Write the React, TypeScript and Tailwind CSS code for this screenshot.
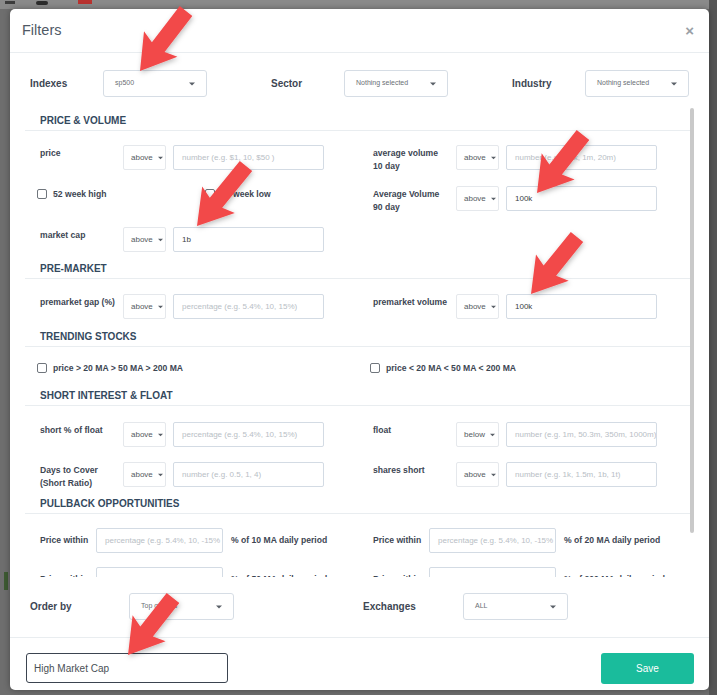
import React from "react";

const Caret = ({ w = 6 }: { w?: number }) => (
  <svg width={w} height={4} viewBox="0 0 6 4" className="shrink-0">
    <path d="M0 0.5h6L3 3.6z" fill="#5a6068" />
  </svg>
);

const TopSelect = ({ value, w = 104 }: { value: string; w?: number }) => (
  <div
    className="h-[27px] border border-[#d6dde5] rounded-[3px] flex items-center justify-between pl-[11px] pr-[11px] text-[7px] text-[#6a6f75] bg-white shrink-0"
    style={{ width: w }}
  >
    <span>{value}</span>
    <Caret />
  </div>
);

const OpSelect = ({ value }: { value: string }) => (
  <div className="w-[43px] h-[25px] border border-[#e5e8ec] rounded-[2px] flex items-center pl-[7px] gap-[5px] text-[8px] text-[#555b62] shrink-0">
    <span>{value}</span>
    <Caret w={5} />
  </div>
);

const Input = ({ ph, value, w = 151 }: { ph?: string; value?: string; w?: number }) => (
  <div
    className={`h-[25px] border border-[#d3dbe4] rounded-[2px] flex items-center pl-[8px] text-[8px] whitespace-nowrap overflow-hidden shrink-0 ${
      value ? "text-[#3a3f45]" : "text-[#b8bec5]"
    }`}
    style={{ width: w }}
  >
    {value ?? ph}
  </div>
);

const Label = ({ children, w = 83 }: { children: React.ReactNode; w?: number }) => (
  <div
    className="h-[25px] text-[8.6px] font-bold text-[#3d4653] leading-[13px] pt-[2px] shrink-0 overflow-visible"
    style={{ width: w }}
  >
    {children}
  </div>
);

const Field = ({
  label,
  op = "above",
  ph,
  value,
}: {
  label: React.ReactNode;
  op?: string;
  ph?: string;
  value?: string;
}) => (
  <div className="flex items-start h-[25px]">
    <Label>{label}</Label>
    <OpSelect value={op} />
    <div className="w-[7px]" />
    <Input ph={ph} value={value} />
  </div>
);

const Heading = ({ children, mt }: { children: React.ReactNode; mt: string }) => (
  <div
    className={`h-[19px] border-b border-[#e9edf0] pl-[15px] text-[10px] font-bold text-[#34495e] leading-[18px] ${mt}`}
  >
    {children}
  </div>
);

const Row = ({ children, mt }: { children: React.ReactNode; mt: string }) => (
  <div className={`grid grid-cols-[333px_1fr] h-[25px] pl-[15px] ${mt}`}>{children}</div>
);

const Check = ({ label }: { label: string }) => (
  <div className="flex items-center">
    <div className="w-[10px] h-[10px] border border-[#6f757c] rounded-[2px] bg-white shrink-0" />
    <span className="ml-[6px] text-[8.6px] font-bold text-[#3d4653] whitespace-nowrap">{label}</span>
  </div>
);

const Pull = ({ suffix }: { suffix: string }) => (
  <div className="flex items-center h-[25px]">
    <div className="w-[56px] text-[8.6px] font-bold text-[#3d4653] shrink-0">Price within</div>
    <Input ph="percentage (e.g. 5.4%, 10, -15%" w={127} />
    <div className="ml-[8px] text-[8.6px] font-bold text-[#3d4653] whitespace-nowrap">{suffix}</div>
  </div>
);

function arrow(tip: [number, number], tail: [number, number]) {
  const dx = tip[0] - tail[0];
  const dy = tip[1] - tail[1];
  const L = Math.hypot(dx, dy);
  const d = [dx / L, dy / L];
  const n = [-d[1], d[0]];
  const H = 34;
  const W = 21;
  const w = 8;
  const B = [tip[0] - d[0] * H, tip[1] - d[1] * H];
  const B2 = [tip[0] - d[0] * (H - 4), tip[1] - d[1] * (H - 4)];
  const pts = [
    [tail[0] + n[0] * w, tail[1] + n[1] * w],
    [B2[0] + n[0] * w, B2[1] + n[1] * w],
    [B[0] + n[0] * W, B[1] + n[1] * W],
    tip,
    [B[0] - n[0] * W, B[1] - n[1] * W],
    [B2[0] - n[0] * w, B2[1] - n[1] * w],
    [tail[0] - n[0] * w, tail[1] - n[1] * w],
  ];
  return pts.map((p) => `${p[0].toFixed(1)},${p[1].toFixed(1)}`).join(" ");
}

const ARROWS: [[number, number], [number, number]][] = [
  [[140, 71], [186, 11]],
  [[197, 226], [246, 166]],
  [[537, 193], [583, 135]],
  [[531, 294], [577, 237]],
  [[128, 655], [173, 598]],
];

export default function App() {
  return (
    <div className="relative w-[717px] h-[695px] bg-[#6e6e6e] overflow-hidden pl-[10px] pt-[9px] font-['Liberation_Sans',Arial,sans-serif]">
      {/* background fragments */}
      <div className="absolute left-0 top-0 w-[717px] h-[9px] bg-[#8a8a8a]" />
      <div className="absolute left-[78px] top-0 w-[14px] h-[4px] bg-[#b8322f]" />
      <div className="absolute left-[36px] top-[1px] w-[12px] h-[4px] bg-[#2c2c2c] rounded-[2px]" />
      <div className="absolute left-[5px] top-[1px] w-[10px] h-[3px] bg-[#3c3c3c]" />
      <div className="absolute left-[4px] top-[572px] w-[4px] h-[18px] bg-[#3d5a32]" />
      <div className="absolute left-[709px] top-0 w-[8px] h-[695px] bg-[#555]" />

      <div className="relative w-[699px] h-[681px] bg-white rounded-[5px] flex flex-col shadow-[0_0_6px_rgba(0,0,0,0.35)]">
        {/* header */}
        <div className="h-[44px] shrink-0 border-b border-[#e9edf0] flex items-center justify-between pl-[12px] pr-[15px]">
          <span className="text-[14.5px] text-[#4f5a66]">Filters</span>
          <span className="text-[15px] font-bold text-[#9aa0a6] leading-none">×</span>
        </div>

        {/* body */}
        <div className="flex-1 flex flex-col min-h-0">
          <div className="mt-[17px] pl-[20px] flex">
            {[
              ["Indexes", "sp500"],
              ["Sector", "Nothing selected"],
              ["Industry", "Nothing selected"],
            ].map(([l, v]) => (
              <div key={l} className="w-[241px] shrink-0 flex items-center">
                <div className="w-[73px] shrink-0 text-[10px] font-bold text-[#3d4653]">{l}</div>
                <TopSelect value={v} />
              </div>
            ))}
          </div>

          {/* scroll area */}
          <div className="mt-[6px] ml-[15px] h-[474px] flex shrink-0">
            <div className="w-[665px] h-[474px] overflow-hidden">
              <Heading mt="mt-[9px]">PRICE &amp; VOLUME</Heading>
              <Row mt="mt-[14px]">
                <Field label="price" ph="number (e.g. $1, 10, $50 )" />
                <Field
                  label={
                    <>
                      average volume
                      <br />
                      10 day
                    </>
                  }
                  ph="number (e.g. 1.2k, 1m, 20m)"
                />
              </Row>
              <Row mt="mt-[16px]">
                <div className="flex items-start pt-[2px] -ml-[3px]">
                  <div className="w-[168px]">
                    <Check label="52 week high" />
                  </div>
                  <Check label="52 week low" />
                </div>
                <Field
                  label={
                    <>
                      Average Volume
                      <br />
                      90 day
                    </>
                  }
                  value="100k"
                />
              </Row>
              <Row mt="mt-[16px]">
                <Field label="market cap" value="1b" />
                <div />
              </Row>

              <Heading mt="mt-[8px]">PRE-MARKET</Heading>
              <Row mt="mt-[15px]">
                <Field label="premarket gap (%)" ph="percentage (e.g. 5.4%, 10, 15%)" />
                <Field label="premarket volume" value="100k" />
              </Row>

              <Heading mt="mt-[9px]">TRENDING STOCKS</Heading>
              <Row mt="mt-[9px]">
                <div className="h-[25px] flex items-center -ml-[3px]">
                  <Check label="price > 20 MA > 50 MA > 200 MA" />
                </div>
                <div className="h-[25px] flex items-center -ml-[3px]">
                  <Check label="price < 20 MA < 50 MA < 200 MA" />
                </div>
              </Row>

              <Heading mt="mt-[6px]">SHORT INTEREST &amp; FLOAT</Heading>
              <Row mt="mt-[16px]">
                <Field label="short % of float" ph="percentage (e.g. 5.4%, 10, 15%)" />
                <Field label="float" op="below" ph="number (e.g. 1m, 50.3m, 350m, 1000m)" />
              </Row>
              <Row mt="mt-[15px]">
                <Field
                  label={
                    <>
                      Days to Cover
                      <br />
                      (Short Ratio)
                    </>
                  }
                  ph="number (e.g. 0.5, 1, 4)"
                />
                <Field label="shares short" ph="number (e.g. 1k, 1.5m, 1b, 1t)" />
              </Row>

              <Heading mt="mt-[8px]">PULLBACK OPPORTUNITIES</Heading>
              <Row mt="mt-[14px]">
                <Pull suffix="% of 10 MA daily period" />
                <Pull suffix="% of 20 MA daily period" />
              </Row>
              <Row mt="mt-[14px]">
                <Pull suffix="% of 50 MA daily period" />
                <Pull suffix="% of 200 MA daily period" />
              </Row>
              <Row mt="mt-[14px]">
                <Pull suffix="% of 10 EMA daily period" />
                <Pull suffix="% of 20 EMA daily period" />
              </Row>
            </div>
            <div className="w-[4px]">
              <div className="mt-[5px] h-[425px] w-[4px] bg-[#c9c9c9] rounded-[2px]" />
            </div>
          </div>

          {/* order by */}
          <div className="mt-[16px] pl-[20px] flex">
            <div className="w-[333px] shrink-0 flex items-center">
              <div className="w-[99px] shrink-0 text-[10px] font-bold text-[#3d4653]">Order by</div>
              <TopSelect value="Top gainers" w={105} />
            </div>
            <div className="flex items-center">
              <div className="w-[100px] shrink-0 text-[10px] font-bold text-[#3d4653]">Exchanges</div>
              <TopSelect value="ALL" w={105} />
            </div>
          </div>
        </div>

        {/* footer */}
        <div className="h-[53px] shrink-0 border-t border-[#e9edf0] flex items-start justify-between pl-[16px] pr-[15px] pt-[15px]">
          <div className="w-[202px] h-[30px] border-[1.5px] border-[#3b4450] rounded-[3px] flex items-center pl-[7px] text-[10px] text-[#4a4f55]">
            High Market Cap
          </div>
          <div className="w-[93px] h-[31px] bg-[#1abc9c] rounded-[3px] flex items-center justify-center text-[10px] text-white">
            Save
          </div>
        </div>
      </div>

      {/* annotation arrows */}
      <svg className="absolute left-0 top-0 pointer-events-none" width={717} height={695}>
        <defs>
          <filter id="sh" x="-30%" y="-30%" width="160%" height="160%">
            <feDropShadow dx="1" dy="2" stdDeviation="2.5" floodColor="#000" floodOpacity="0.25" />
          </filter>
        </defs>
        {ARROWS.map(([tip, tail], i) => (
          <polygon key={i} points={arrow(tip, tail)} fill="#f2484a" filter="url(#sh)" />
        ))}
      </svg>
    </div>
  );
}
